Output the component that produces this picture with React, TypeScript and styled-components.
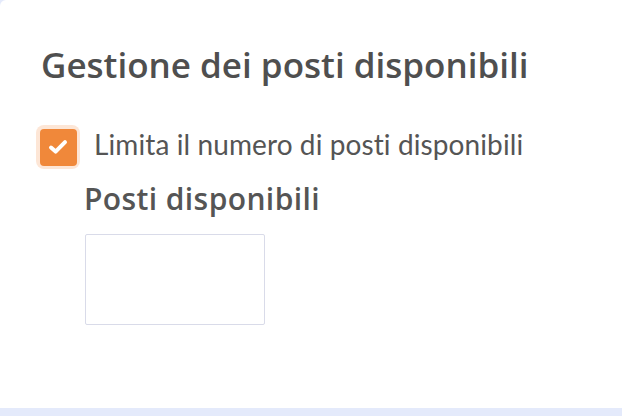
import React from "react";
import styled, { createGlobalStyle } from "styled-components";

const Global = createGlobalStyle`
  html, body { margin: 0; padding: 0; background: #e4eafb; }
  body { width: 622px; height: 416px; overflow: hidden; }
  * { box-sizing: border-box; }
`;

const Card = styled.section`
  width: 640px;
  height: 408px;
  background: #ffffff;
  border-radius: 6px 0 0 0;
  padding: 45px 0 0 41px;
  display: flex;
  flex-direction: column;
`;

const Title = styled.h2`
  margin: 0;
  font-family: "Open Sans", "Noto Sans", sans-serif;
  font-weight: 600;
  font-size: 35px;
  line-height: 40px;
  color: #4f4f4f;
  white-space: nowrap;
`;

const CheckRow = styled.label`
  display: flex;
  align-items: center;
  gap: 14px;
  margin-top: 40px;
  margin-left: -5px;
`;

const Box = styled.span`
  flex: none;
  width: 44px;
  height: 44px;
  border-radius: 8px;
  background: #fde6d6;
  display: flex;
  align-items: center;
  justify-content: center;
`;

const Inner = styled.span`
  width: 37px;
  height: 37px;
  border-radius: 4px;
  background: #f0883a;
  display: flex;
  align-items: center;
  justify-content: center;
`;

const LabelText = styled.span`
  font-family: "Lato", "Noto Sans", sans-serif;
  font-size: 28px;
  line-height: 34px;
  letter-spacing: 0.1px;
  margin-bottom: 6px;
  color: #555555;
  white-space: nowrap;
`;

const Field = styled.div`
  display: flex;
  flex-direction: column;
  margin-left: 44px;
  margin-top: 10px;
`;

const FieldLabel = styled.span`
  font-family: "Open Sans", "Noto Sans", sans-serif;
  font-weight: 600;
  font-size: 30px;
  line-height: 40px;
  letter-spacing: 0.4px;
  margin-left: -1px;
  color: #555555;
  white-space: nowrap;
`;

const Input = styled.div`
  margin-top: 15px;
  width: 180px;
  height: 91px;
  border: 1px solid #d9dbe9;
  border-radius: 2px;
  background: #fff;
`;

export default function App() {
  return (
    <>
      <Global />
      <Card>
        <Title>Gestione dei posti disponibili</Title>
        <CheckRow>
          <Box>
            <Inner>
              <svg width="20" height="16" viewBox="0 0 20 16">
                <path d="M3 8.5 L7.6 12.6 L17 3.2" fill="none" stroke="#fff" strokeWidth="4" strokeLinecap="round" strokeLinejoin="round" />
              </svg>
            </Inner>
          </Box>
          <LabelText>Limita il numero di posti disponibili</LabelText>
        </CheckRow>
        <Field>
          <FieldLabel>Posti disponibili</FieldLabel>
          <Input />
        </Field>
      </Card>
    </>
  );
}
